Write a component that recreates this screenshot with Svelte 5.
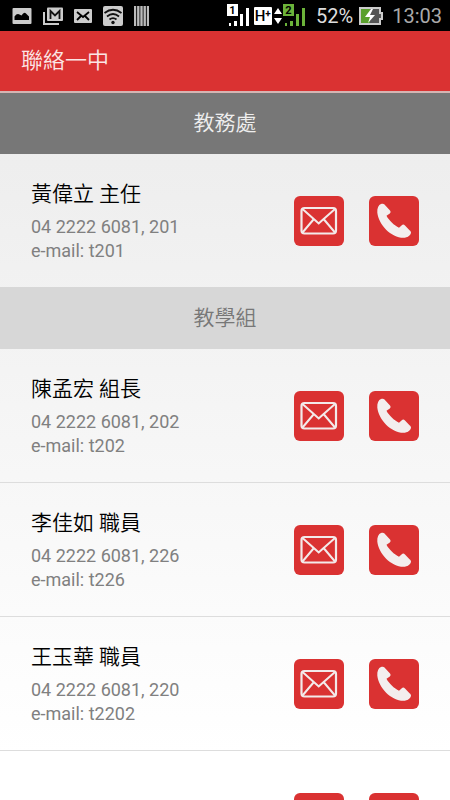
<script>
  const groups = [
    {
      title: '教務處',
      tone: 'dark',
      people: [{ name: '黃偉立 主任', phone: '04 2222 6081, 201', mail: 't201' }]
    },
    {
      title: '教學組',
      tone: 'light',
      people: [
        { name: '陳孟宏 組長', phone: '04 2222 6081, 202', mail: 't202' },
        { name: '李佳如 職員', phone: '04 2222 6081, 226', mail: 't226' },
        { name: '王玉華 職員', phone: '04 2222 6081, 220', mail: 't2202' },
        { name: '', phone: '', mail: '' }
      ]
    }
  ];
  const dial = (phone) => 'tel:' + phone.replaceAll(' ', '').replace(',', ';ext=');
</script>

<div class="app">
  <div class="status">
    <div class="notes">
      <svg width="20" height="18" viewBox="0 0 20 18" aria-hidden="true">
        <rect x="0.5" y="1" width="19" height="16" rx="1" fill="#ccc" />
        <path d="M2.5 13V9.500Q5 6 7.500 7.500L9.500 8.500Q12 4.500 14 6.500L17 9.500V13z" fill="#000" />
      </svg>
      <svg width="20" height="18" viewBox="0 0 20 18" aria-hidden="true">
        <path d="M1 5v12h15" fill="none" stroke="#ccc" stroke-width="2" />
        <rect x="4" y="0.500" width="16" height="13.500" rx="1" fill="#ccc" />
        <path d="M7.500 12V4l4.500 4.500L16.500 4v8" fill="none" stroke="#111" stroke-width="1.800" />
      </svg>
      <svg width="18" height="18" viewBox="0 0 18 18" aria-hidden="true">
        <rect y="2" width="18" height="14" rx="1" fill="#ccc" />
        <path d="M3 5l6 5 6-5M3 13l4-4M15 13l-4-4" fill="none" stroke="#000" stroke-width="1.800" />
      </svg>
      <svg width="20" height="20" viewBox="0 0 20 20" aria-hidden="true">
        <rect width="20" height="20" rx="2" fill="#ccc" />
        <path d="M1.500 7q8.500-6.500 17 0M4 10.500q6-5 12 0M6.500 13.500q3.500-2.800 7 0" fill="none" stroke="#111" stroke-width="1.800" />
        <circle cx="10" cy="16.500" r="1.700" fill="#111" />
      </svg>
      <svg width="15" height="20" viewBox="0 0 15 20" aria-hidden="true">
        <path d="M1 0v20M4.300 0v20M7.500 0v20M10.700 0v20M14 0v20" stroke="#bbb" stroke-width="2.400" />
      </svg>
    </div>
    <div class="state">
      <svg width="78" height="24" viewBox="0 0 78 24" aria-hidden="true">
        <rect width="11" height="12" fill="#fff" />
        <text x="5.500" y="10" font-size="11" font-weight="700" text-anchor="middle" fill="#000">1</text>
        <path d="M2 19h2v3H2zM7 17h3v5H7zM13 10h3v12h-3zM19 4h3v18h-3z" fill="#fff" />
        <rect x="27" y="3" width="18" height="18" rx="1" fill="#fff" />
        <text x="33" y="17" font-size="15" font-weight="500" text-anchor="middle" fill="#000">H</text>
        <text x="41" y="13" font-size="10" font-weight="700" text-anchor="middle" fill="#000">+</text>
        <path d="M51 4l4 6h-8zM51 20l4-6h-8z" fill="#fff" />
        <rect x="56" width="11" height="12" fill="#6cb33a" />
        <text x="61.500" y="10" font-size="11" font-weight="700" text-anchor="middle" fill="#000">2</text>
        <path d="M58 19h2v3h-2zM63 17h3v5h-3zM69 10h3v12h-3zM75 4h3v18h-3z" fill="#6cb33a" />
      </svg>
      <span class="level">52%</span>
      <svg width="24" height="18" viewBox="0 0 24 18" aria-hidden="true">
        <path d="M1 1h20v5h2v6h-2v5H1z" fill="#555" stroke="#ccc" stroke-width="2" />
        <path d="M2 2h9v14H2z" fill="#5aa02c" />
        <path d="M12 2L6 10h5l-2 6 7-8h-5l3-6z" fill="#fff" />
      </svg>
      <time>13:03</time>
    </div>
  </div>

  <header><h1>聯絡一中</h1></header>

  <main>
    {#each groups as group}
      <section>
        <h2 class={group.tone}>{group.title}</h2>
        <ul>
          {#each group.people as person}
            <li>
              <div class="info">
                {#if person.name}
                  <h3>{person.name}</h3>
                  <p>{person.phone}</p>
                  <p>e-mail: {person.mail}</p>
                {/if}
              </div>
              <a class="action" href={'mailto:' + person.mail} aria-label="e-mail">
                <svg width="50" height="50" viewBox="0 0 50 50" aria-hidden="true">
                  <rect x="7.500" y="12" width="34.500" height="25.500" rx="3" fill="none" stroke="#f3eaea" stroke-width="2.200" />
                  <path d="M8.500 13L22 25L24.700 27.500L27.400 25L41 13M8.500 36.500L19.500 23.500M41 36.500L30 23.500" fill="none" stroke="#f3eaea" stroke-width="2" />
                </svg>
              </a>
              <a class="action" href={dial(person.phone)} aria-label="phone">
                <svg width="50" height="50" viewBox="0 0 50 50" aria-hidden="true">
                  <path d="M12 8C9.500 9 8 12 8.300 16.500C9.500 28.500 22 41.800 34.500 41.800C38.500 41.800 41.500 39.500 42 36.800C42.200 35.800 41.500 35 40.500 34.200L36 29.500C34.800 28.300 33.800 28.300 32.800 29.200L30 31.800C25.500 29.800 19.500 24 17.500 19.800L20.800 17.500C21.800 16.500 21.800 15.500 21 14.500L15.500 8.500C14.500 7.500 13.500 7.400 12 8Z" fill="#f3eeee" />
                </svg>
              </a>
            </li>
          {/each}
        </ul>
      </section>
    {/each}
  </main>
</div>

<style>
  :global(body) {
    margin: 0;
  }
  .app {
    height: 100vh;
    overflow: hidden;
    background: #fff;
    font-family: Roboto, 'Noto Sans CJK TC', sans-serif;
  }
  .status {
    display: flex;
    align-items: center;
    justify-content: space-between;
    height: 31px;
    padding: 0 8px 0 12px;
    background: #000;
    color: #ddd;
    font-size: 20px;
  }
  .notes,
  .state {
    display: flex;
    align-items: center;
  }
  .notes {
    gap: 11px;
  }
  .level {
    margin: 0 6px 0 11px;
  }
  time {
    margin-left: 9px;
    color: #aaa;
  }
  svg {
    display: block;
  }
  header {
    padding: 0 21px;
    border-bottom: 2px solid #d5b5b3;
    background: #da3232;
  }
  h1,
  h2,
  h3,
  p,
  ul {
    margin: 0;
    padding: 0;
    font-weight: 350;
  }
  h1 {
    color: #fbe6e6;
    font-size: 22px;
    line-height: 60px;
  }
  main {
    background: linear-gradient(#ececec, #fff 660px);
  }
  h2 {
    font-size: 21px;
    line-height: 61px;
    text-align: center;
  }
  .dark {
    background: #777;
    color: #eee;
  }
  .light {
    border-top: 1px solid #d7d7d7;
    background: #d7d7d7;
    color: #777;
  }
  li {
    display: flex;
    align-items: center;
    gap: 25px;
    min-height: 133px;
    padding: 0 31px;
  }
  li + li {
    border-top: 1px solid #ddd;
  }
  .info {
    flex: 1;
  }
  h3 {
    margin-bottom: 6px;
    color: #000;
    font-size: 21px;
    line-height: 30px;
  }
  p {
    color: #808080;
    font-size: 18px;
    font-weight: 400;
    line-height: 24px;
  }
  .action {
    border-radius: 6px;
    background: #da3232;
  }
</style>
